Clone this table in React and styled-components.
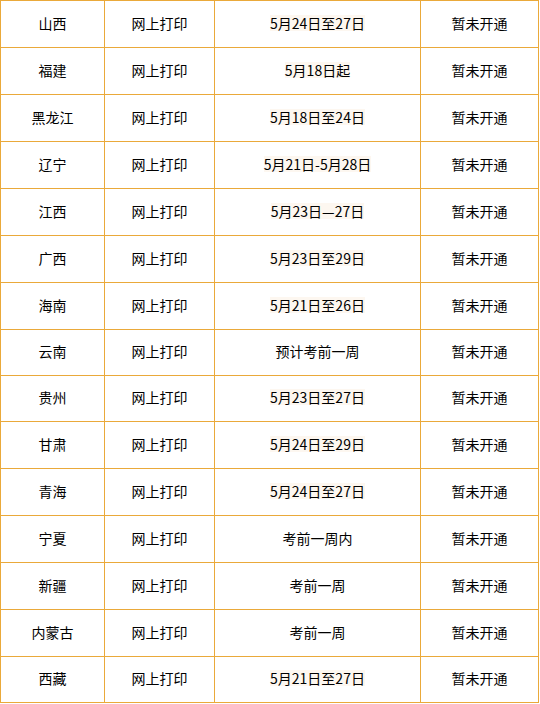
import React from "react";
import styled, { createGlobalStyle } from "styled-components";

const GlobalStyle = createGlobalStyle`
  html, body {
    margin: 0;
    padding: 0;
    background: #ffffff;
  }
  body {
    font-family: "Noto Sans CJK SC", "Noto Sans", sans-serif;
  }
`;

const Grid = styled.div`
  display: grid;
  grid-template-columns: 104px 110px 206px 118px;
  width: 539px;
  box-sizing: border-box;
  border-top: 1px solid #eaa93a;
  border-left: 1px solid #eaa93a;
`;

const Cell = styled.div`
  box-sizing: border-box;
  height: ${({ h }) => h}px;
  padding-bottom: 3px;
  border-right: 1px solid #eaa93a;
  border-bottom: 1px solid #eaa93a;
  display: flex;
  align-items: center;
  justify-content: center;
  font-size: 14px;
  line-height: 16px;
  color: #000;
  white-space: nowrap;
`;

const DateText = styled.span`
  background: #fdf7f0;
`;

const rows = [
  ["山西", "5月24日至27日"],
  ["福建", "5月18日起"],
  ["黑龙江", "5月18日至24日"],
  ["辽宁", "5月21日-5月28日"],
  ["江西", "5月23日—27日"],
  ["广西", "5月23日至29日"],
  ["海南", "5月21日至26日"],
  ["云南", "预计考前一周", true],
  ["贵州", "5月23日至27日"],
  ["甘肃", "5月24日至29日"],
  ["青海", "5月24日至27日"],
  ["宁夏", "考前一周内", true],
  ["新疆", "考前一周", true],
  ["内蒙古", "考前一周", true],
  ["西藏", "5月21日至27日"],
];

const heights = [47, 47, 47, 47, 47, 47, 47, 46, 46, 47, 47, 47, 47, 47, 46];

export default function App() {
  return (
    <>
      <GlobalStyle />
      <Grid>
        {rows.map(([prov, date, plain], i) => (
          <React.Fragment key={prov}>
            <Cell h={heights[i]}>{prov}</Cell>
            <Cell h={heights[i]}>网上打印</Cell>
            <Cell h={heights[i]}>{plain ? date : <DateText>{date}</DateText>}</Cell>
            <Cell h={heights[i]}>暂未开通</Cell>
          </React.Fragment>
        ))}
      </Grid>
    </>
  );
}
